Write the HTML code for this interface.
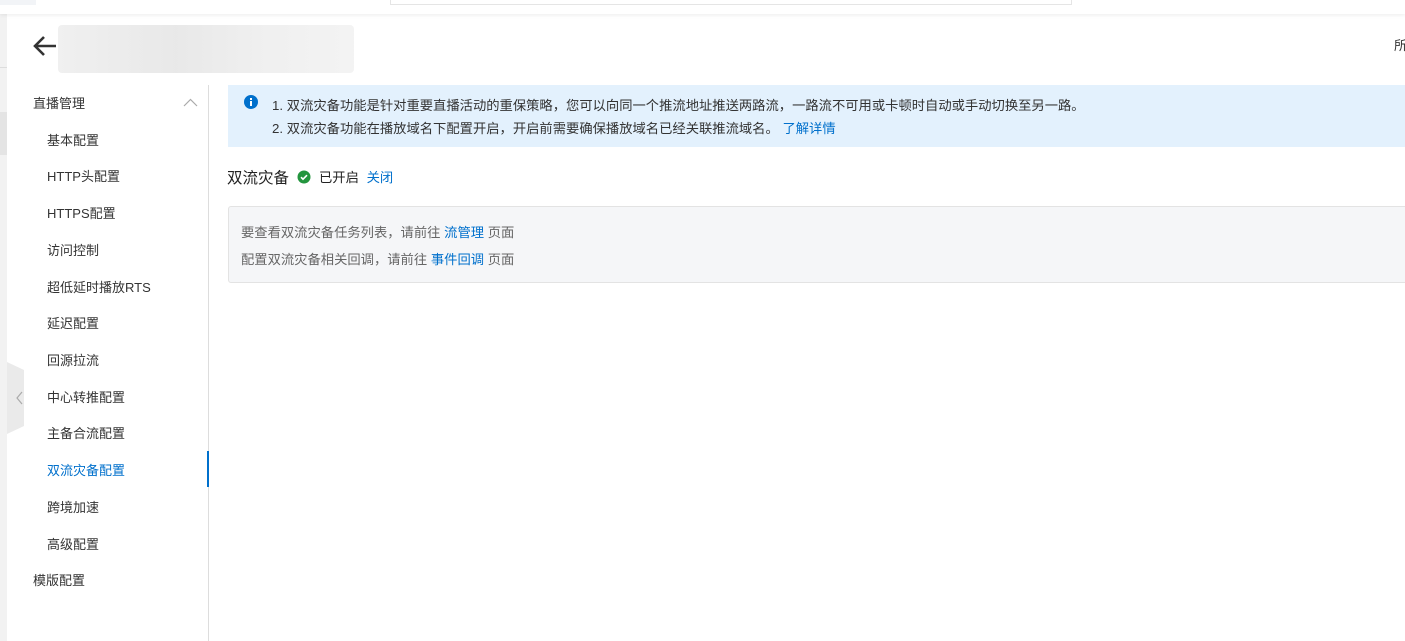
<!DOCTYPE html><html><head><meta charset="utf-8"><style>
*{margin:0;padding:0;box-sizing:border-box}
body{width:1405px;height:641px;overflow:hidden;background:#fff;font-family:"Liberation Sans","Noto Sans CJK SC",sans-serif;position:relative;color:#333}
.a{position:absolute}
.nav{font-size:13px;color:#333;position:absolute;left:47px}
.blue{color:#0070cc}
</style></head><body>
<div class="a" style="left:0;top:0;width:1405px;height:14px;background:#fff;box-shadow:0 1px 4px rgba(0,0,0,.08);z-index:2"></div>
<div class="a" style="left:0;top:0;width:36px;height:5px;background:#f2f4f7;z-index:3"></div>
<div class="a" style="left:390px;top:-2px;width:682px;height:7px;border:1px solid #e5e5e5;z-index:3"></div>
<div class="a" style="left:0;top:14px;width:7px;height:627px;background:#f2f2f2"></div>
<div class="a" style="left:0;top:112px;width:7px;height:43px;background:#e4e4e4"></div>
<div class="a" style="left:0;top:67px;width:7px;height:1px;background:#ddd"></div>
<svg class="a" style="left:32px;top:35px" width="26" height="22" viewBox="0 0 26 22"><path d="M24 11H4M12 2L3 11l9 9" fill="none" stroke="#333" stroke-width="2.6"/></svg>
<div class="a" style="left:58px;top:25px;width:296px;height:48px;background:linear-gradient(90deg,#eee,#e6e6e6 40%,#eee 70%,#f2f2f2);border-radius:4px;opacity:.9"></div>
<div class="a" style="left:1394px;top:35px;font-size:13px">所</div>
<div class="a" style="left:208px;top:85px;width:1px;height:556px;background:#ddd"></div>
<div class="a" style="left:207px;top:451px;width:2px;height:36px;background:#0070cc"></div>
<svg class="a" style="left:7px;top:362px" width="18" height="72"><path d="M0 0L17 8V64L0 72Z" fill="#eaeaea"/><path d="M15 30l-5 6 5 6" fill="none" stroke="#aaa" stroke-width="1.2"/></svg>
<div class="nav" style="left:33px;top:93px">直播管理</div>
<svg class="a" style="left:183px;top:98px" width="15" height="9"><path d="M1 8l6.5-6.5L14 8" fill="none" stroke="#aaa" stroke-width="1.2"/></svg>
<div class="nav" style="top:130px">基本配置</div>
<div class="nav" style="top:166px">HTTP头配置</div>
<div class="nav" style="top:203px">HTTPS配置</div>
<div class="nav" style="top:240px">访问控制</div>
<div class="nav" style="top:277px">超低延时播放RTS</div>
<div class="nav" style="top:313px">延迟配置</div>
<div class="nav" style="top:350px">回源拉流</div>
<div class="nav" style="top:387px">中心转推配置</div>
<div class="nav" style="top:423px">主备合流配置</div>
<div class="nav blue" style="top:460px">双流灾备配置</div>
<div class="nav" style="top:497px">跨境加速</div>
<div class="nav" style="top:534px">高级配置</div>
<div class="nav" style="left:33px;top:570px">模版配置</div>
<div class="a" style="left:228px;top:85px;width:1177px;height:62px;background:#e3f1fd"></div>
<svg class="a" style="left:244px;top:95px" width="14" height="14"><circle cx="7" cy="7" r="7" fill="#0070cc"/><rect x="6" y="6" width="2" height="5" fill="#fff"/><rect x="6" y="3" width="2" height="2" fill="#fff"/></svg>
<div class="a" style="left:272px;top:95px;font-size:13.3px;color:#333">1. 双流灾备功能是针对重要直播活动的重保策略，您可以向同一个推流地址推送两路流，一路流不可用或卡顿时自动或手动切换至另一路。</div>
<div class="a" style="left:272px;top:118px;font-size:13.3px;color:#333">2. 双流灾备功能在播放域名下配置开启，开启前需要确保播放域名已经关联推流域名。 <span class="blue">了解详情</span></div>
<div class="a" style="left:227px;top:166px;font-size:15.5px;color:#222">双流灾备</div>
<svg class="a" style="left:297px;top:170px" width="14" height="14"><circle cx="7" cy="7" r="6.5" fill="#23953e"/><path d="M4 7.2l2 2 4-4" fill="none" stroke="#fff" stroke-width="1.6"/></svg>
<div class="a" style="left:319px;top:167px;font-size:13.3px;color:#222">已开启 <span class="blue" style="margin-left:4px">关闭</span></div>
<div class="a" style="left:228px;top:206px;width:1180px;height:77px;background:#f5f6f8;border:1px solid #e3e3e3;border-radius:3px"></div>
<div class="a" style="left:241px;top:222px;font-size:13.3px;color:#666">要查看双流灾备任务列表，请前往 <span class="blue">流管理</span> 页面</div>
<div class="a" style="left:241px;top:249px;font-size:13.3px;color:#666">配置双流灾备相关回调，请前往 <span class="blue">事件回调</span> 页面</div>
</body></html>
